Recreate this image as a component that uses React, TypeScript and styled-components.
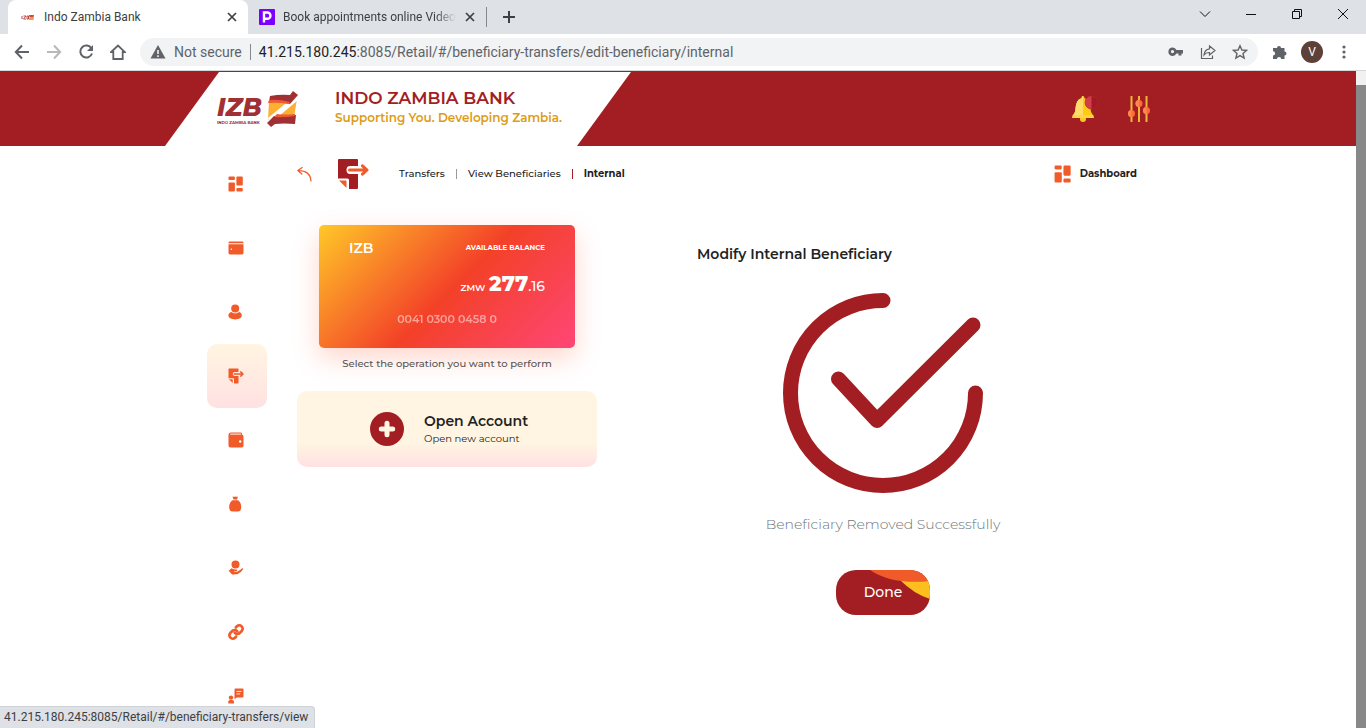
import React from 'react';
import styled, { createGlobalStyle } from 'styled-components';
import { Link as ChainIcon } from 'lucide-react';

const red = '#a31e22';
const orange = '#f15a29';
const uiFont = '"Segoe UI", Roboto, sans-serif';

const GlobalStyle = createGlobalStyle`
  * { box-sizing: border-box; }
  body { margin: 0; background: #fff; color: #222; font-family: Montserrat, Inter, sans-serif; }
  button { border: 0; padding: 0; background: none; font: inherit; color: inherit; cursor: pointer; }
  a { color: inherit; text-decoration: none; }
  svg { display: block; flex: none; }
`;

const Window = styled.div`
  display: flex;
  flex-direction: column;
  height: 100vh;
  overflow: hidden;
`;

/* ---------- browser frame ---------- */

const TabStrip = styled.div`
  display: flex;
  flex: none;
  height: 34px;
  padding-left: 8px;
  background: #dee1e6;
  font: 12px/16px ${uiFont};
  color: #3c4043;
`;

const Tab = styled.div<{ $active?: boolean }>`
  display: flex;
  align-items: center;
  width: ${p => (p.$active ? 240 : 238)}px;
  padding: 0 10px 0 ${p => (p.$active ? 12 : 11)}px;
  border-radius: 8px 8px 0 0;
  background: ${p => (p.$active ? '#fff' : 'transparent')};
`;

const TabTitle = styled.span<{ $fade?: boolean }>`
  flex: 1;
  margin: 0 8px;
  overflow: hidden;
  white-space: nowrap;
  ${p => p.$fade && 'mask-image: linear-gradient(90deg, #000 88%, transparent);'}
`;

const TabDivider = styled.span`
  align-self: center;
  width: 1px;
  height: 20px;
  background: #85888c;
`;

const NewTab = styled.button`
  width: 44px;
  display: flex;
  align-items: center;
  justify-content: center;
`;

const WindowButtons = styled.div`
  display: flex;
  margin-left: auto;
  padding-bottom: 6px;
`;

const WindowButton = styled.button`
  display: flex;
  align-items: center;
  justify-content: center;
  width: 46px;
  color: #111;
`;

const Toolbar = styled.div`
  display: flex;
  flex: none;
  align-items: center;
  height: 37px;
  padding: 0 6px;
  border-bottom: 1px solid #d5d7da;
  background: #fff;
  color: #5f6368;
`;

const ToolButton = styled.button<{ $dim?: boolean }>`
  display: flex;
  align-items: center;
  justify-content: center;
  width: 32px;
  height: 28px;
  opacity: ${p => (p.$dim ? 0.45 : 1)};
`;

const Omnibox = styled.div`
  display: flex;
  flex: 1;
  align-items: center;
  height: 28px;
  margin: 0 6px;
  padding: 0 2px 0 10px;
  border-radius: 14px;
  background: #f1f3f4;
  font: 14px/20px ${uiFont};
`;

const Security = styled.span`
  margin: 0 8px;
  padding-right: 8px;
  border-right: 1px solid #85888c;
  line-height: 16px;
  white-space: nowrap;
`;

const Address = styled.span`
  flex: 1;
  white-space: nowrap;
  b { font-weight: 400; color: #202124; }
`;

const Avatar = styled.button`
  width: 22px;
  height: 22px;
  margin: 0 5px;
  border-radius: 50%;
  background: #5d4037;
  color: #fff;
  font: 12px/22px ${uiFont};
`;

const StatusBubble = styled.div`
  position: fixed;
  left: 0;
  bottom: 0;
  height: 22px;
  padding: 0 6px 0 4px;
  border: 1px solid #cfd2d6;
  border-width: 1px 1px 0 0;
  border-radius: 0 4px 0 0;
  background: #dee1e6;
  color: #3c4043;
  font: 12px/21px ${uiFont};
`;

const Viewport = styled.div`
  display: flex;
  flex: 1;
  min-height: 0;
`;

const Page = styled.div`
  flex: 1;
  min-width: 0;
  overflow: hidden;
`;

const ScrollTrack = styled.div`
  width: 10px;
  padding-top: 14px;
  background: #f1f1f1;
`;

const ScrollThumb = styled.div`
  height: 100%;
  background: #888;
`;

/* ---------- bank page ---------- */

const Header = styled.header`
  height: 75px;
  padding-top: 1px;
  background: ${red};
`;

const Container = styled.div`
  display: flex;
  width: 100%;
  max-width: 942px;
  margin: 0 auto;
`;

const Brand = styled.div`
  display: flex;
  align-items: center;
  width: 466px;
  height: 74px;
  margin-left: -42px;
  padding-left: 51px;
  background: #fff;
  clip-path: polygon(54px 0, 100% 0, 412px 100%, 0 100%);
`;

const BrandText = styled.div`
  margin-left: 36px;
  padding-bottom: 4px;
  white-space: nowrap;
`;

const BankName = styled.div`
  color: ${red};
  font-size: 17px;
  font-weight: 600;
  line-height: 22px;
`;

const Slogan = styled.div`
  color: #dd9c16;
  font-size: 12px;
  font-weight: 600;
  line-height: 18px;
`;

const HeaderActions = styled.div`
  display: flex;
  align-items: center;
  gap: 28px;
  margin: 0 -2px 0 auto;
`;

const Rail = styled.nav`
  display: flex;
  flex: none;
  flex-direction: column;
  width: 60px;
  padding-top: 6px;
`;

const RailLink = styled.a<{ $active?: boolean }>`
  display: flex;
  align-items: center;
  justify-content: center;
  height: 64px;
  padding-right: 2px;
  border-radius: 10px;
  background: ${p => (p.$active ? 'linear-gradient(#fff5e1, #ffe1e2)' : 'none')};
`;

const Main = styled.main`
  flex: 1;
  min-width: 0;
  margin-left: 30px;
`;

const TopRow = styled.div`
  display: flex;
  align-items: center;
  height: 56px;
  padding-right: 12px;
  font-size: 10px;
  line-height: 16px;
`;

const PageIcon = styled.span`
  margin: 0 30px 0 24px;
`;

const Crumb = styled.a<{ $current?: boolean }>`
  font-weight: ${p => (p.$current ? 700 : 500)};
`;

const CrumbBar = styled.span<{ $strong?: boolean }>`
  width: 1px;
  height: 10px;
  margin: 0 11px;
  background: ${p => (p.$strong ? red : '#999')};
`;

const DashboardLink = styled.a`
  display: flex;
  align-items: center;
  gap: 8px;
  margin-left: auto;
  font-weight: 700;
`;

const Columns = styled.div`
  display: flex;
  gap: 100px;
  padding-top: 23px;
`;

const Accounts = styled.section`
  display: flex;
  flex: none;
  flex-direction: column;
  width: 300px;
`;

const Card = styled.div`
  display: flex;
  flex-direction: column;
  justify-content: space-between;
  height: 123px;
  margin: 0 22px;
  padding: 15px 30px 21px;
  border-radius: 5px;
  background: linear-gradient(135deg, #ffc828 0%, #f34128 52%, #ff4676 100%);
  box-shadow: 0 10px 26px rgba(255, 90, 50, 0.25);
  color: #fff;
`;

const CardTop = styled.div`
  display: flex;
  align-items: center;
  justify-content: space-between;
  font-size: 14px;
  font-weight: 600;
  line-height: 16px;
`;

const CardLabel = styled.span`
  font-size: 7px;
  font-weight: 700;
`;

const Balance = styled.div`
  padding-top: 4px;
  text-align: right;
  font-size: 14px;
  font-weight: 500;
  line-height: 24px;
  small { font-size: 9px; font-weight: 600; }
  strong { font-size: 21px; font-weight: 800; }
`;

const AccountNumber = styled.div`
  text-align: center;
  font-size: 11px;
  font-weight: 600;
  line-height: 16px;
  opacity: 0.5;
`;

const Hint = styled.p`
  margin: 8px 0 19px;
  text-align: center;
  color: #555;
  font-size: 10px;
  font-weight: 500;
  line-height: 16px;
`;

const OpenAccount = styled.button`
  display: flex;
  align-items: center;
  height: 76px;
  padding-left: 73px;
  border-radius: 10px;
  background: linear-gradient(#fff5e2 68%, #ffe1e2);
  text-align: left;
`;

const OpenText = styled.span`
  display: flex;
  flex-direction: column;
  margin-left: 20px;
  font-size: 10px;
  line-height: 16px;
  strong { font-size: 14px; font-weight: 600; line-height: 20px; }
`;

const Result = styled.section`
  display: flex;
  flex: none;
  flex-direction: column;
  align-items: center;
  width: 372px;
  padding-top: 19px;
`;

const Title = styled.h1`
  align-self: flex-start;
  margin: 0 0 29px;
  font-size: 14px;
  font-weight: 600;
  line-height: 20px;
`;

const Message = styled.p`
  margin: 21px 0 36px;
  color: #6c757d;
  font-size: 14px;
  font-weight: 300;
  line-height: 20px;
`;

const DoneButton = styled.button`
  position: relative;
  width: 94px;
  height: 45px;
  padding-bottom: 2px;
  overflow: hidden;
  border-radius: 20px;
  background: ${red};
  color: #fff;
  font-size: 14px;
  font-weight: 500;
  line-height: 20px;
`;

const DoneArt = styled.svg`
  position: absolute;
  inset: 0;
`;

const DoneLabel = styled.span`
  position: relative;
`;

/* ---------- drawings ---------- */

type IconProps = { size?: number };

const TilesIcon = ({ size = 16 }: IconProps) => (
  <svg width={size} height={size} viewBox="0 0 16 16" fill={orange}>
    <rect x="0.5" y="0.5" width="6.4" height="3.4" rx="1" />
    <rect x="8.4" y="0.5" width="6.4" height="9" rx="1" />
    <rect x="0.5" y="6.4" width="6.4" height="9.2" rx="1" />
    <rect x="8.4" y="12" width="6.4" height="3.6" rx="1" />
  </svg>
);

const CardIcon = () => (
  <svg width="16" height="16" viewBox="0 0 16 16" fill={orange}>
    <path d="M0.5 3.2V2.8Q0.5 1.6 1.7 1.6H14.3Q15.5 1.6 15.5 2.8V3.2ZM0.5 4.2H15.5V12.8Q15.5 14.4 14 14.4H2Q0.5 14.4 0.5 12.8Z" />
    <path d="M2.5 9.2H4M3.6 8.6V9.8" stroke="#fff" strokeWidth="0.8" />
  </svg>
);

const PersonIcon = () => (
  <svg width="16" height="16" viewBox="0 0 16 16" fill={orange}>
    <circle cx="7.2" cy="4.5" r="4" />
    <path d="M3.3 8.1C1.6 8.8 0.4 9.9 0.4 11.5C0.4 13.8 3.2 15.4 7.2 15.4S13.8 13.8 13.8 11.5C13.8 9.9 12.8 8.8 11.1 8.1C9 9.9 5.4 9.9 3.3 8.1Z" />
  </svg>
);

const TransferIcon = ({ size = 16, body = orange }: IconProps & { body?: string }) => (
  <svg width={size} height={size} viewBox="0 0 32 32">
    <path d="M2 1H20Q21 1 21 2V8H13Q9.5 8 9.5 12T13 16H21V30Q21 31 20 31H12V22Q12 20.500 10.500 20.500H1V2Q1 1 2 1Z" fill={body} />
    <path d="M2 22.500H8.500Q9.500 22.500 9.500 23.500V30Z" fill={orange} />
    <path d="M12.500 12H29M25.500 7.800L30 12L25.500 16.200" fill="none" stroke={orange} strokeWidth="3" strokeLinecap="round" strokeLinejoin="round" />
  </svg>
);

const WalletIcon = () => (
  <svg width="16" height="16" viewBox="0 0 16 16" fill={orange}>
    <path d="M3 0.500H13Q14 0.500 14.200 2.800Q15.500 3 15.500 4.500V13.500Q15.500 15.500 13.500 15.500H2.500Q0.500 15.500 0.500 13.500V3Q0.500 0.500 3 0.500Z" />
    <path d="M2.800 1.500H12.500Q13.200 1.500 13.300 2.800H2Q2 1.500 2.800 1.500Z" fill="#fff" opacity="0.750" />
    <circle cx="12.200" cy="9.500" r="1.200" fill="#fff" />
  </svg>
);

const BagIcon = () => (
  <svg width="16" height="16" viewBox="0 0 16 16" fill={orange}>
    <path d="M4.500 0.500Q5.800 1 7.200 0.400Q8.600 1 10 0.500L9 3.500H5.500ZM4.500 4.300H10Q13.200 6.500 13.200 11Q13.200 15.500 10 15.500H4.500Q1.200 15.500 1.200 11Q1.200 6.500 4.500 4.300Z" />
  </svg>
);

const HandCoinIcon = () => (
  <svg width="16" height="16" viewBox="0 0 16 16">
    <circle cx="7.500" cy="4.500" r="4" fill={orange} />
    <path d="M0.500 11L3.500 8.300Q5.500 9.700 8.500 9.600Q9.800 9.800 9.300 10.900L6.800 11.300M9.500 11.200Q12 10.500 13.500 8.700Q15 7.900 15.300 8.900Q13 12.800 9.200 14.200Q5.500 14 3.800 14.700Z" fill={orange} />
    <path d="M0.800 10.800L3.800 14.300L9.200 13.800L10.800 11.800L5.500 9.800Z" fill={orange} />
    <path d="M6.200 11.600L9.800 11.300Q10.500 10.600 9.500 9.800" fill="none" stroke="#fff" strokeWidth="0.700" />
  </svg>
);

const SupportIcon = () => (
  <svg width="16" height="16" viewBox="0 0 16 16" fill={orange}>
    <path d="M7.500 0.500H14.500Q15.500 0.500 15.500 1.500V8.500Q15.500 9.500 14.500 9.500H8.800L6.500 11.300V1.500Q6.500 0.500 7.500 0.500Z" />
    <path d="M8.500 3.400H13.500M8.500 5.900H12.200" stroke="#fff" strokeWidth="0.900" />
    <circle cx="3" cy="9.600" r="2.200" />
    <path d="M0.300 15.600V13.500Q0.500 12 2 12H4.200Q5.900 12 6 13.500V15.600Z" />
  </svg>
);

const BackIcon = () => (
  <svg width="16" height="16" viewBox="0 0 16 16" fill="none" stroke={orange} strokeWidth="1.200" strokeLinecap="round" strokeLinejoin="round">
    <path d="M14 15C13.500 8.500 9.500 4.500 1 4.700M5.200 1.500L0.800 4.600L4.800 8" />
  </svg>
);

const Emblem = () => (
  <svg width="83" height="38" viewBox="0 0 83 38" role="img" aria-label="IZB">
    <text x="1" y="26" fontFamily="Montserrat, Lato, sans-serif" fontWeight="800" fontStyle="italic" fontSize="25" fill="#a03033">IZB</text>
    <text x="1" y="34" fontFamily="Montserrat, Lato, sans-serif" fontWeight="700" fontSize="4" fill="#a03033">INDO ZAMBIA BANK</text>
    <path d="M53 11L81 9L78 27L52 30Z" fill="#fbb034" />
    <path d="M69 14L82 5L81 11L63 26L53 31L52 28Z" fill="#fff" />
    <path d="M54 6Q64 4 74 5L77 1L82 5L74 14Q63 10 53 12Z" fill="#a03033" />
    <path d="M80 25L79 34Q68 33 59 34L55 37L51 33L58 26Q67 28 80 25Z" fill="#a03033" />
    <path d="M53 10Q63 9 74 12L72 14Q62 12 52 13ZM79 24Q68 25 61 24L58 27Q67 28 79 26Z" fill="#ee5a35" />
  </svg>
);

const BellIcon = () => (
  <svg width="28" height="28" viewBox="0 0 28 28">
    <circle cx="12" cy="24" r="3" fill="#fbc926" />
    <path d="M12 1Q13.500 1 13.500 3.200Q19 4.500 19.500 13Q19.500 18 22.500 20.500V23H1.500V20.500Q4.500 18 4.500 13Q5 4.500 10.500 3.200Q10.500 1 12 1Z" fill="#ffcb12" />
    <path d="M12 1V20H2Q4.500 18 4.500 13Q5 4.500 10.500 3.200Q10.500 1 12 1Z" fill="#ffdc69" />
    <path d="M2 20H22L23 23H1Z" fill="#ffd447" />
    <circle cx="20.500" cy="7.500" r="6.500" fill="#a31a26" stroke="#b3262d" strokeWidth="0.600" />
    <path d="M20.500 1A6.500 6.500 0 0 0 20.500 14Z" fill="#cf3e49" />
  </svg>
);

const SlidersIcon = () => (
  <svg width="24" height="28" viewBox="0 0 24 28">
    <path d="M4.500 1V27M12 1V27M19.500 1V27" stroke="#efb63c" strokeWidth="2" />
    <g fill="#ff6b35">
      <circle cx="4.500" cy="18.500" r="3.500" />
      <circle cx="12" cy="8.500" r="3.500" />
      <circle cx="19.500" cy="15.500" r="3.500" />
    </g>
    <path d="M4.500 15A3.500 3.500 0 0 0 4.500 22ZM12 5A3.500 3.500 0 0 0 12 12ZM19.500 12A3.500 3.500 0 0 0 19.500 19Z" fill="#ff8754" />
  </svg>
);

const PlusBadge = () => (
  <svg width="34" height="34" viewBox="0 0 34 34">
    <circle cx="17" cy="17" r="17" fill={red} />
    <path d="M17 11.300V22.700M11.300 17H22.700" stroke="#fff5e2" strokeWidth="5" strokeLinecap="round" />
  </svg>
);

const SuccessMark = () => (
  <svg width="200" height="200" viewBox="0 0 200 200" fill="none" stroke={red} strokeWidth="15" strokeLinecap="round" strokeLinejoin="round">
    <path d="M100 7.500A92.500 92.500 0 1 0 192.500 100" />
    <path d="M55.500 86L94 127.500L190 32" />
  </svg>
);

const Close = () => (
  <svg width="12" height="12" viewBox="0 0 12 12" stroke="#3c4043" strokeWidth="1.700">
    <path d="M2 2L10 10M10 2L2 10" />
  </svg>
);

const Stroke = ({ d, size = 16, width = 2 }: { d: string; size?: number; width?: number }) => (
  <svg width={size} height={size} viewBox="0 0 16 16" fill="none" stroke="currentColor" strokeWidth={width}>
    <path d={d} />
  </svg>
);

const railItems = [
  { name: 'Dashboard', icon: <TilesIcon /> },
  { name: 'Accounts', icon: <CardIcon /> },
  { name: 'Profile', icon: <PersonIcon /> },
  { name: 'Transfers', icon: <TransferIcon />, active: true },
  { name: 'Wallet', icon: <WalletIcon /> },
  { name: 'Deposits', icon: <BagIcon /> },
  { name: 'Loans', icon: <HandCoinIcon /> },
  { name: 'Links', icon: <ChainIcon size={16} color={orange} strokeWidth={4} /> },
  { name: 'Support', icon: <SupportIcon /> },
];

export default function App() {
  return (
    <Window>
      <GlobalStyle />
      <TabStrip>
        <Tab $active>
          <svg width="16" height="16" viewBox="0 0 16 16">
            <path d="M2 7V10M3.500 7H6L3.500 10H6M7 7V10H8.500V7Z" stroke="#b8484a" fill="none" />
            <path d="M9 6H14L13.500 8H9.500Z" fill="#c94a3c" />
            <path d="M9.500 8H14L13.500 11H9Z" fill="#f2994a" />
          </svg>
          <TabTitle>Indo Zambia Bank</TabTitle>
          <button aria-label="Close tab"><Close /></button>
        </Tab>
        <Tab>
          <svg width="16" height="16" viewBox="0 0 16 16">
            <rect width="16" height="16" rx="1" fill="#7b00ff" />
            <path d="M5 13.500V3.500H8.300A2.800 2.800 0 0 1 8.300 9.800H5" fill="none" stroke="#fff" strokeWidth="2.400" />
          </svg>
          <TabTitle $fade>Book appointments online Video</TabTitle>
          <button aria-label="Close tab"><Close /></button>
        </Tab>
        <TabDivider />
        <NewTab aria-label="New tab"><Stroke d="M8 2V14M2 8H14" /></NewTab>
        <WindowButtons>
          <WindowButton aria-label="Search tabs"><Stroke d="M3 5.500L8 10.500L13 5.500" width={1} /></WindowButton>
          <WindowButton aria-label="Minimize"><Stroke d="M3 8.500H13" width={1} /></WindowButton>
          <WindowButton aria-label="Restore"><Stroke d="M3.500 5.500H10.500V12.500H3.500ZM5.500 5.500V3.500H12.500V10.500H10.500" width={1} /></WindowButton>
          <WindowButton aria-label="Close"><Stroke d="M3 3L13 13M13 3L3 13" width={1} /></WindowButton>
        </WindowButtons>
      </TabStrip>
      <Toolbar>
        <ToolButton aria-label="Back"><Stroke d="M15 8H2M8 1.500L1.800 8L8 14.500" /></ToolButton>
        <ToolButton aria-label="Forward" $dim><Stroke d="M1 8H14M8 1.500L14.200 8L8 14.500" /></ToolButton>
        <ToolButton aria-label="Reload">
          <svg width="16" height="16" viewBox="0 0 16 16" fill="none" stroke="currentColor" strokeWidth="2">
            <path d="M13.500 4.500A6 6 0 1 0 14 9.500" />
            <path d="M15 1V7H9Z" fill="currentColor" stroke="none" />
          </svg>
        </ToolButton>
        <ToolButton aria-label="Home"><Stroke d="M1.200 8L8 1.500L14.800 8H12.700V15H3.300V8Z" width={1.8} /></ToolButton>
        <Omnibox>
          <svg width="16" height="16" viewBox="0 0 16 16">
            <path d="M8 1L15.500 14.500H0.500Z" fill="#5f6368" />
            <path d="M8 6V10M8 11.200V13" stroke="#f1f3f4" strokeWidth="1.600" />
          </svg>
          <Security>Not secure</Security>
          <Address><b>41.215.180.245</b>:8085/Retail/#/beneficiary-transfers/edit-beneficiary/internal</Address>
          <ToolButton aria-label="Passwords">
            <svg width="16" height="16" viewBox="0 0 16 16" fill="currentColor" fillRule="evenodd">
              <path d="M4.500 3.500A4 4 0 0 1 8.400 6H15V9.500H13.500V11.500H10.500V9.500H8.400A4.200 4.200 0 1 1 4.500 3.500ZM4.500 6A1.600 1.600 0 1 0 4.500 9.200A1.600 1.600 0 0 0 4.500 6Z" />
            </svg>
          </ToolButton>
          <ToolButton aria-label="Share"><Stroke d="M1.500 4V14.500H12.500V11.500M9.500 2L15 6.500L9.500 11V8.500Q6 8.300 4 11Q4.500 5.500 9.500 4.800Z" width={1.2} /></ToolButton>
          <ToolButton aria-label="Bookmark"><Stroke d="M8 1.700L9.900 6L14.500 6.400L11 9.500L12.100 14.100L8 11.600L3.900 14.100L5 9.500L1.500 6.400L6.100 6Z" width={1.400} /></ToolButton>
        </Omnibox>
        <ToolButton aria-label="Extensions">
          <svg width="16" height="16" viewBox="0 0 16 16" fill="currentColor">
            <path d="M1 4H5A2 2 0 1 1 9 4H12.500V7.500A2 2 0 1 1 12.500 11.500V15H9.200A2 2 0 0 0 5 15H1V11.500A2.100 2.100 0 0 0 1 7.300Z" />
          </svg>
        </ToolButton>
        <Avatar aria-label="Profile">V</Avatar>
        <ToolButton aria-label="Menu">
          <svg width="16" height="16" viewBox="0 0 16 16" fill="currentColor">
            <circle cx="8" cy="3" r="1.600" /><circle cx="8" cy="8" r="1.600" /><circle cx="8" cy="13" r="1.600" />
          </svg>
        </ToolButton>
      </Toolbar>

      <Viewport>
        <Page>
          <Header>
            <Container>
              <Brand>
                <Emblem />
                <BrandText>
                  <BankName>INDO ZAMBIA BANK</BankName>
                  <Slogan>Supporting You. Developing Zambia.</Slogan>
                </BrandText>
              </Brand>
              <HeaderActions>
                <button aria-label="Notifications"><BellIcon /></button>
                <button aria-label="Settings"><SlidersIcon /></button>
              </HeaderActions>
            </Container>
          </Header>
          <Container>
            <Rail>
              {railItems.map(item => (
                <RailLink key={item.name} href="#" aria-label={item.name} $active={item.active}>{item.icon}</RailLink>
              ))}
            </Rail>
            <Main>
              <TopRow>
                <button aria-label="Go back"><BackIcon /></button>
                <PageIcon><TransferIcon size={32} body={red} /></PageIcon>
                <Crumb href="#">Transfers</Crumb>
                <CrumbBar />
                <Crumb href="#">View Beneficiaries</Crumb>
                <CrumbBar $strong />
                <Crumb href="#" $current>Internal</Crumb>
                <DashboardLink href="#"><TilesIcon size={18} />Dashboard</DashboardLink>
              </TopRow>
              <Columns>
                <Accounts>
                  <Card>
                    <CardTop>IZB<CardLabel>AVAILABLE BALANCE</CardLabel></CardTop>
                    <Balance><small>ZMW</small> <strong>277</strong>.16</Balance>
                    <AccountNumber>0041 0300 0458 0</AccountNumber>
                  </Card>
                  <Hint>Select the operation you want to perform</Hint>
                  <OpenAccount>
                    <PlusBadge />
                    <OpenText><strong>Open Account</strong>Open new account</OpenText>
                  </OpenAccount>
                </Accounts>
                <Result>
                  <Title>Modify Internal Beneficiary</Title>
                  <SuccessMark />
                  <Message>Beneficiary Removed Successfully</Message>
                  <DoneButton>
                    <DoneArt width="94" height="45" viewBox="0 0 94 45">
                      <path d="M64 10L94 8V29Q78 24 64 10Z" fill="#fcbf1e" />
                      <path d="M34 0H94V11Q56 15 34 0Z" fill={orange} />
                    </DoneArt>
                    <DoneLabel>Done</DoneLabel>
                  </DoneButton>
                </Result>
              </Columns>
            </Main>
          </Container>
        </Page>
        <ScrollTrack><ScrollThumb /></ScrollTrack>
      </Viewport>
      <StatusBubble>41.215.180.245:8085/Retail/#/beneficiary-transfers/view</StatusBubble>
    </Window>
  );
}
